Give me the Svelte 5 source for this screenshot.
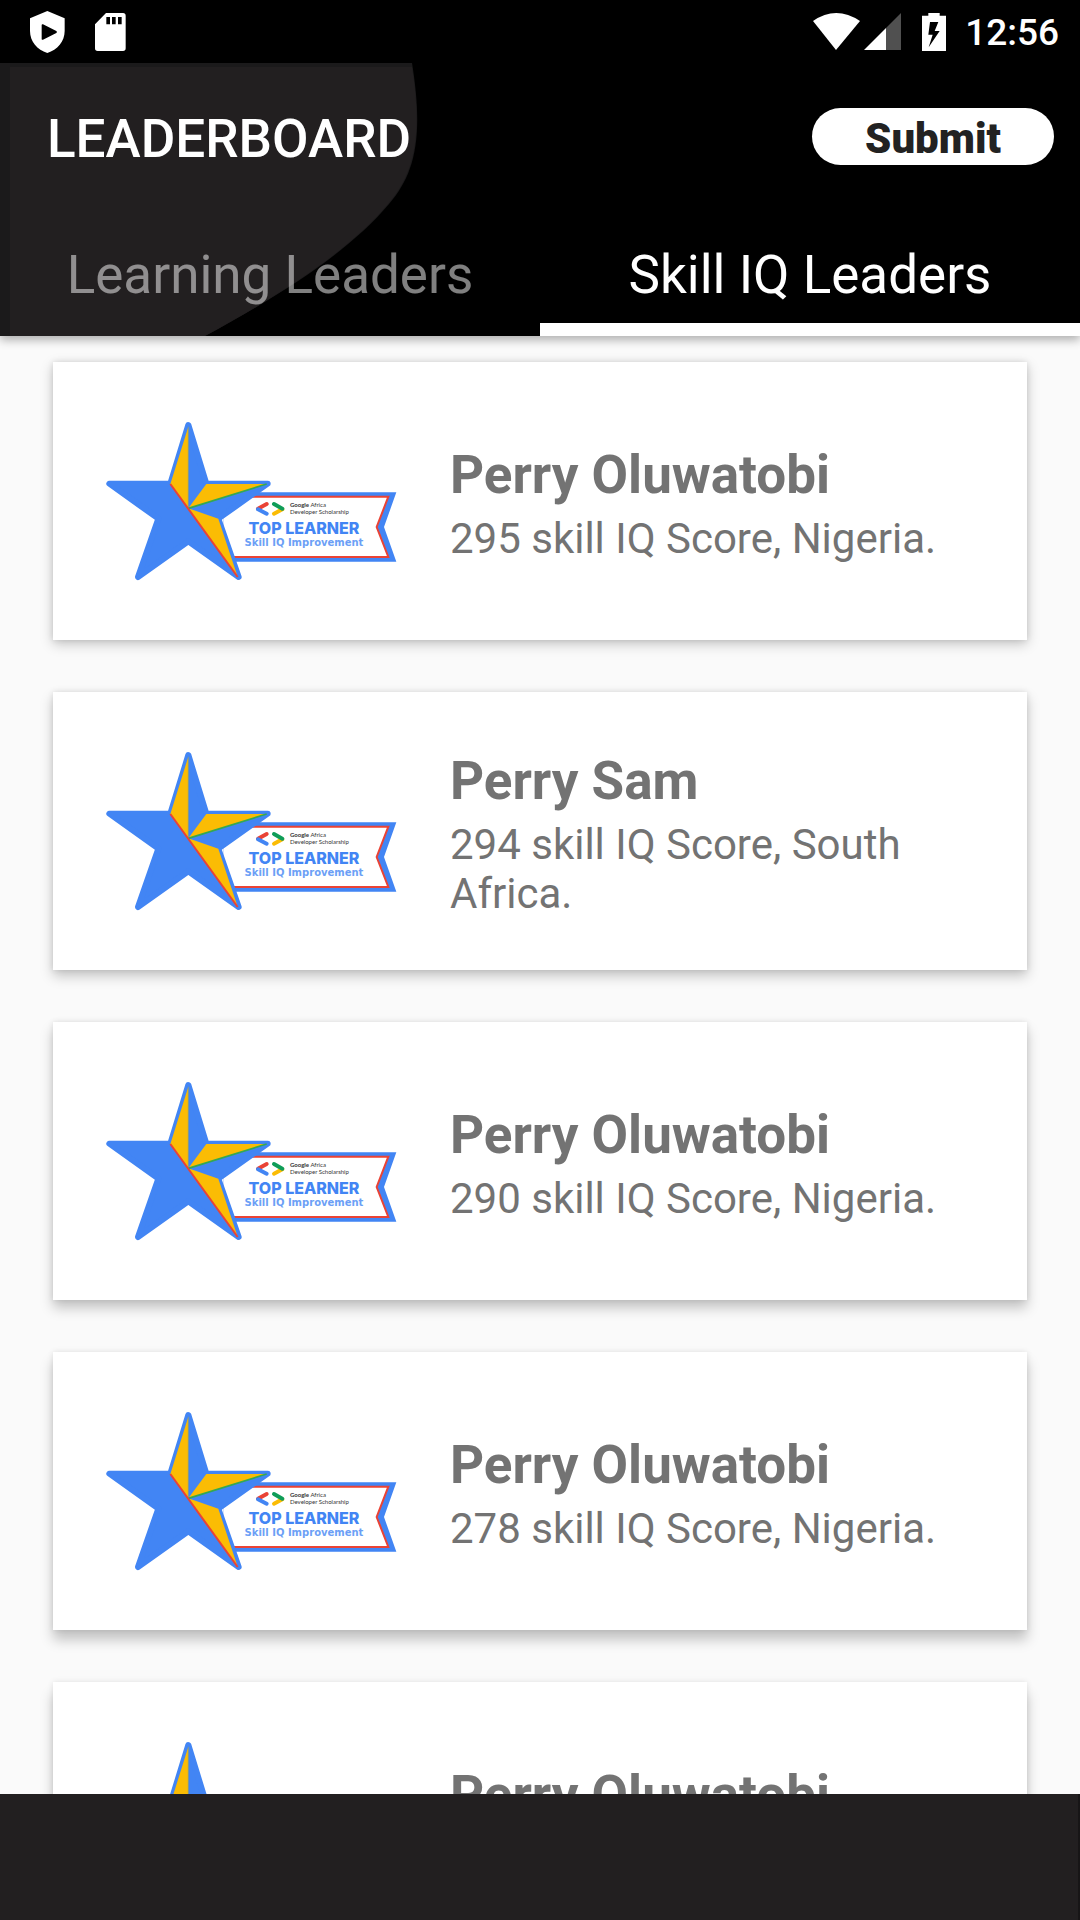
<script>
  const leaders = [
    { name: 'Perry Oluwatobi', score: 295, country: 'Nigeria' },
    { name: 'Perry Sam', score: 294, country: 'South Africa' },
    { name: 'Perry Oluwatobi', score: 290, country: 'Nigeria' },
    { name: 'Perry Oluwatobi', score: 278, country: 'Nigeria' },
    { name: 'Perry Oluwatobi', score: 275, country: 'Nigeria' }
  ];
  const tabs = ['Learning Leaders', 'Skill IQ Leaders'];
  let active = $state(1);
</script>

{#snippet badge()}
  <svg class="badge" viewBox="0 0 292 162" role="img" aria-label="Top learner badge">
    <svg width="292" height="162" viewBox="48 60 876 486">
      <path d="M400 277H919L882 381L919 485H400Z" fill="#4285f4" />
      <path d="M400 290H895L860 381L895 471H400" fill="#fff" stroke="#ea4335" stroke-width="6" />
      <path
        d="M295 75L349 251H533L385 356L446 531L295 424L144 531L205 356L58 251H241Z"
        fill="#4285f4" stroke="#4285f4" stroke-width="18" stroke-linejoin="round" />
      <path d="M295 80L241 252L295 325ZM349 252H530L295 325ZM295 325L385 356L443 530Z" fill="#fbbc04" />
      <path d="M295 80V325" stroke="#7d9a86" stroke-width="2" />
      <path d="M295 325L530 252" stroke="#34a853" stroke-width="5" />
      <path d="M241 252L443 531" stroke="#ea4335" stroke-width="6" />
      <g stroke-width="12" stroke-linecap="round">
        <path d="M530 312L504 326" stroke="#ea4335" />
        <path d="M504 328L530 341" stroke="#4285f4" />
        <path d="M552 341L577 328" stroke="#fbbc04" />
        <path d="M552 312L577 326" stroke="#0f9d58" />
      </g>
    </svg>
    <text class="org" x="184" y="87"><tspan class="strong">Google</tspan> Africa</text>
    <text class="org" x="184" y="94">Developer Scholarship</text>
    <text class="top" x="198" y="114">TOP LEARNER</text>
    <text class="skill" x="198" y="126">Skill IQ Improvement</text>
  </svg>
{/snippet}

<div class="screen">
  <div class="status">
    <svg width="35" height="42" viewBox="0 0 105 126">
      <path fill="#fff" fill-rule="evenodd" d="M52 0L104 22V60C104 92 82 116 52 126C22 116 0 92 0 60V22ZM39 40Q35 38 35 43V83Q35 88 39 86L79 66Q83 63 79 60Z" />
    </svg>
    <svg width="31" height="38" viewBox="0 0 93 114">
      <path fill="#fff" fill-rule="evenodd" d="M33 0H84Q92 0 92 8V106Q92 114 84 114H8Q0 114 0 106V34ZM34 12V34H45V12ZM51 12V34H62V12ZM69 12V34H80V12Z" />
    </svg>
    <div class="system">
      <svg width="47" height="37" viewBox="0 0 47 37">
        <path fill="#fff" d="M0 8Q23 -8 47 8L23 37Z" />
      </svg>
      <svg class="signal" width="37" height="37" viewBox="0 0 37 37">
        <path fill="#505050" d="M37 0V37H22V15Z" />
        <path fill="#fff" d="M0 37L22 15V37Z" />
      </svg>
      <svg class="battery" width="24" height="38" viewBox="0 0 72 114">
        <path fill="#fff" fill-rule="evenodd" d="M19 0H53V8H72V114H0V8H19ZM24 27L19 65H32L20 103L53 54H38L49 27Z" />
      </svg>
      <span class="time">12:56</span>
    </div>
  </div>

  <header>
    <svg class="swoosh" width="420" height="273" viewBox="0 0 420 273" aria-hidden="true">
      <path fill="#1b1a1b" d="M0 0H412C424 74 415 111 389 141C352 185 292 226 205 273H0Z" />
      <path fill="#221f20" d="M10 4H412C423 74 414 111 388 141C351 185 291 226 205 273H10Z" />
    </svg>
    <div class="toolbar">
      <h1>LEADERBOARD</h1>
      <button class="submit" type="button">Submit</button>
    </div>
    <div class="tabs" role="tablist">
      {#each tabs as label, i}
        <button class="tab" class:active={active === i} type="button" role="tab" aria-selected={active === i} onclick={() => (active = i)}>{label}</button>
      {/each}
    </div>
  </header>

  <main>
    {#each leaders as leader, i}
      <article class="card" style:--drop={`${4 + 2 * i}px`}>
        {@render badge()}
        <div class="info">
          <h2>{leader.name}</h2>
          <p>{leader.score} skill IQ Score, {leader.country}.</p>
        </div>
      </article>
    {/each}
  </main>

  <footer></footer>
</div>

<style>
  :global(body) {
    margin: 0;
    background: #fafafa;
  }
  .screen {
    display: flex;
    flex-direction: column;
    height: 100vh;
    overflow: hidden;
    font-family: Roboto, sans-serif;
    background: #fafafa;
  }
  svg {
    display: block;
    flex: none;
  }
  .status {
    display: flex;
    align-items: center;
    gap: 30px;
    flex: none;
    height: 63px;
    padding: 0 21px 0 30px;
    box-sizing: border-box;
    background: #000;
    color: #fff;
  }
  .system {
    display: flex;
    align-items: center;
    margin-left: auto;
  }
  .signal {
    margin-left: 4px;
  }
  .battery {
    margin: 0 19px 0 21px;
  }
  .time {
    padding-top: 2px;
    font-size: 37px;
    font-weight: 500;
    line-height: 44px;
  }
  header {
    position: relative;
    z-index: 1;
    flex: none;
    background: #000;
    box-shadow: 0 4px 9px rgba(0, 0, 0, 0.3);
  }
  .swoosh {
    position: absolute;
    top: 0;
    left: 0;
  }
  .toolbar {
    position: relative;
    display: flex;
    align-items: center;
    justify-content: space-between;
    height: 147px;
    padding: 0 26px 0 47px;
  }
  h1 {
    margin: 0;
    padding-top: 4px;
    color: #fff;
    font-size: 53px;
    font-weight: 500;
    line-height: 62px;
  }
  .submit {
    width: 242px;
    height: 57px;
    padding: 4px 0 0;
    border: 0;
    border-radius: 29px;
    background: #fff;
    color: #222;
    font: 900 42px/49px Roboto, sans-serif;
  }
  .tabs {
    position: relative;
    display: flex;
  }
  .tab {
    flex: 1;
    height: 126px;
    padding: 17px 0 0;
    border: 0;
    border-bottom: 13px solid transparent;
    background: none;
    color: rgba(255, 255, 255, 0.5);
    font: 400 53px/62px Roboto, sans-serif;
  }
  .tab.active {
    color: #fff;
    border-bottom-color: #fff;
  }
  main {
    display: flex;
    flex: 1;
    flex-direction: column;
    gap: 52px;
    min-height: 0;
    padding: 26px 53px 0;
    overflow: hidden;
  }
  .card {
    display: flex;
    flex: none;
    align-items: center;
    gap: 52px;
    min-height: 278px;
    padding: 0 53px;
    box-sizing: border-box;
    background: #fff;
    box-shadow:
      0 var(--drop) 12px rgba(0, 0, 0, 0.22),
      0 0 6px rgba(0, 0, 0, 0.1);
  }
  .badge {
    width: 292px;
    height: 162px;
  }
  .info {
    display: flex;
    flex: 1;
    flex-direction: column;
    gap: 8px;
    padding-top: 5px;
    color: #737373;
  }
  h2 {
    margin: 0;
    font-size: 53px;
    font-weight: 700;
    line-height: 62px;
  }
  p {
    margin: 0;
    font-size: 42px;
    line-height: 49px;
  }
  .org {
    fill: #333;
    font: 400 6px Lato, sans-serif;
  }
  .strong {
    font-weight: 700;
  }
  .top {
    fill: #4285f4;
    font: 800 16px Inter, sans-serif;
    text-anchor: middle;
  }
  .skill {
    fill: #6c9ff6;
    font: 700 10px "DejaVu Sans", sans-serif;
    text-anchor: middle;
  }
  footer {
    z-index: 1;
    flex: none;
    height: 126px;
    border-right: 2px solid #171516;
    box-sizing: border-box;
    background: #221f20;
  }
</style>
